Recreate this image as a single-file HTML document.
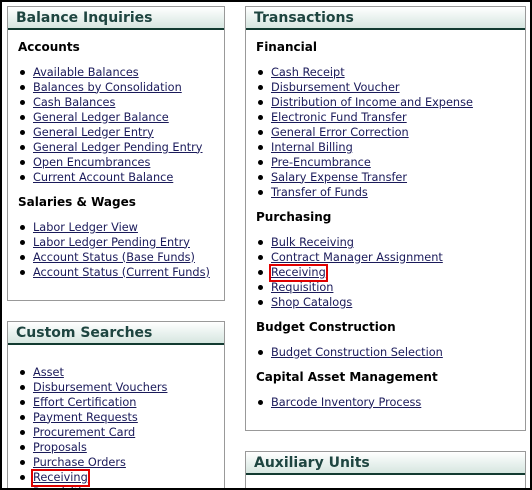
<!DOCTYPE html>
<html><head><meta charset="utf-8"><style>
*{margin:0;padding:0;box-sizing:border-box}
html,body{width:532px;height:490px;overflow:hidden}
body{background:#fff;position:relative;font-family:"DejaVu Sans","Liberation Sans",sans-serif}
#w{position:absolute;left:0;top:0;width:532px;height:490px;overflow:hidden}
.frame{position:absolute;left:0;top:0;width:532px;height:490px;border:2px solid #000;z-index:5;pointer-events:none}
.box{position:absolute;border:1px solid #999;background:#fff}
.hd{position:absolute;left:0;right:0;top:0;height:23px;background:linear-gradient(#fff,#d6e6e0);border-bottom:2px solid #123a30;font-size:14px;font-weight:bold;color:#1e4540;padding-left:8px;line-height:22px}
.t{position:absolute;font-size:11.3px;line-height:15px;white-space:nowrap}
.h{font-weight:bold;font-size:12px;color:#000}
.l{color:#1a1a5a;text-decoration:underline}
.b{position:absolute;width:5px;height:5px;border-radius:50%;background:#000}
.red{position:absolute;border:2px solid #e00000}
</style></head><body><div id="w">
<div class="frame"></div>
<div class="box" style="left:7px;top:6px;width:218px;height:295px"><div class="hd">Balance Inquiries</div></div>
<div class="box" style="left:7px;top:321px;width:218px;height:180px"><div class="hd">Custom Searches</div></div>
<div class="box" style="left:245px;top:6px;width:281px;height:425px"><div class="hd">Transactions</div></div>
<div class="box" style="left:245px;top:451px;width:281px;height:60px"><div class="hd">Auxiliary Units</div></div>
<div id="c"></div>
<div class="red" style="left:31px;top:469px;width:59px;height:18px"></div>
<div class="red" style="left:269px;top:264px;width:59px;height:18px"></div>
</div>
<script>
var items=[
[18,20,47,'h','Accounts'],
[33,22,72,'l',['Available Balances','Balances by Consolidation','Cash Balances','General Ledger Balance','General Ledger Entry','General Ledger Pending Entry','Open Encumbrances','Current Account Balance']],
[18,20,202,'h','Salaries & Wages'],
[33,22,227,'l',['Labor Ledger View','Labor Ledger Pending Entry','Account Status (Base Funds)','Account Status (Current Funds)']],
[33,22,372,'l',['Asset','Disbursement Vouchers','Effort Certification','Payment Requests','Procurement Card','Proposals','Purchase Orders','Receiving','Requisition']],
[256,0,47,'h','Financial'],
[271,260,72,'l',['Cash Receipt','Disbursement Voucher','Distribution of Income and Expense','Electronic Fund Transfer','General Error Correction','Internal Billing','Pre-Encumbrance','Salary Expense Transfer','Transfer of Funds']],
[256,0,217,'h','Purchasing'],
[271,260,242,'l',['Bulk Receiving','Contract Manager Assignment','Receiving','Requisition','Shop Catalogs']],
[256,0,327,'h','Budget Construction'],
[271,260,352,'l',['Budget Construction Selection']],
[256,0,377,'h','Capital Asset Management'],
[271,260,402,'l',['Barcode Inventory Process']]
];
var h='';
items.forEach(function(it){
 if(it[3]=='h'){h+='<div class="t h" style="left:'+it[0]+'px;top:'+(it[2]-7.5)+'px">'+it[4].replace('&','&amp;')+'</div>';}
 else it[4].forEach(function(s,i){var y=it[2]+i*15;
  h+='<div class="b" style="left:'+(it[1]-2)+'px;top:'+(y-2)+'px"></div><div class="t l" style="left:'+it[0]+'px;top:'+(y-7.5)+'px">'+s+'</div>';});
});
document.getElementById('c').innerHTML=h;
</script>
</body></html>
